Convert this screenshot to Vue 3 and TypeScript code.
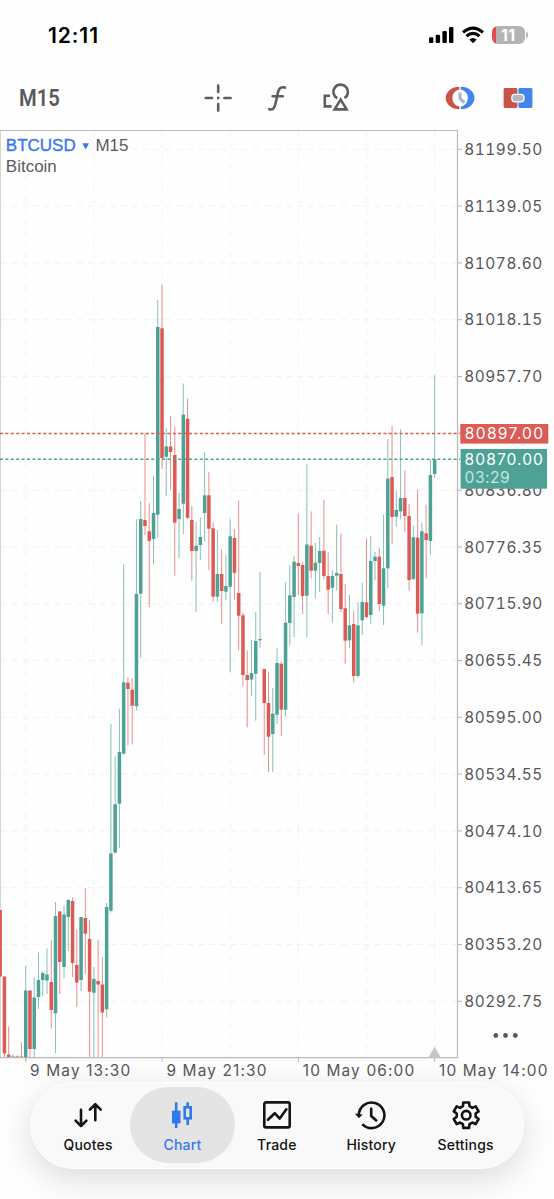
<script setup lang="ts">
type Candle = [high: number, top: number, bottom: number, low: number, up: 0 | 1]

const FIRST_BAR = -6
const BAR_STEP = 4.26
const ORIGIN_X = 25.7

const candles: Candle[] = [
  [910, 910, 976.5, 976.5, 0],
  [976, 976.5, 1053.5, 1057, 0],
  [1026.5, 1054.5, 1057, 1057, 0],
  [1054.5, 1056.5, 1057, 1057, 1],
  [1055.5, 1056.5, 1057, 1057, 0],
  [1042, 1056.5, 1057, 1057, 0],
  [965.5, 990.5, 1057, 1061, 1],
  [990.5, 990.5, 1049, 1057, 0],
  [977.5, 997.5, 1049, 1057, 1],
  [952.5, 980, 997, 1009, 1],
  [971, 973, 980, 996, 1],
  [948.5, 974.5, 980.5, 994, 1],
  [940, 982, 1010, 1028.5, 0],
  [902, 916, 1013.3, 1053, 1],
  [911, 911.5, 962, 994, 0],
  [905.5, 914.5, 967, 978, 1],
  [899, 900, 917, 951, 1],
  [897.5, 901, 963, 977, 0],
  [929.5, 965, 982.5, 1007, 0],
  [917, 917, 980, 991, 1],
  [888, 918, 933.7, 974, 0],
  [920, 939, 991.7, 1057, 0],
  [967, 979, 992.7, 1057, 1],
  [940, 981, 984.5, 1057, 0],
  [957, 984.5, 1012.5, 1057, 0],
  [903, 907, 1009.3, 1017.5, 1],
  [724, 853.5, 910.7, 912.5, 1],
  [756.5, 804.3, 852.7, 852.7, 1],
  [708.7, 752, 803.7, 848, 1],
  [564.3, 682.3, 753.7, 753.7, 1],
  [677.3, 682.7, 689, 745.3, 0],
  [678, 689.7, 705.7, 744.3, 0],
  [519.3, 594, 706.3, 710.5, 1],
  [501, 519, 593.7, 658, 1],
  [433.5, 520, 526, 535.3, 0],
  [503.3, 531.3, 541, 607.3, 0],
  [476, 513, 539, 564.3, 1],
  [300, 327, 514.7, 538, 1],
  [284.7, 328.3, 458, 469, 0],
  [428, 446.3, 456.7, 496, 1],
  [416, 446.5, 452, 490, 0],
  [426.5, 455, 522.7, 575.7, 0],
  [492.7, 509, 519, 558.3, 1],
  [383.5, 414.7, 503.7, 534, 1],
  [398.7, 418.7, 517.7, 519, 0],
  [506, 520, 551, 580.7, 0],
  [522, 545.7, 551, 612, 1],
  [517.5, 537, 545, 560.3, 1],
  [452, 495.3, 513, 541.3, 1],
  [472, 495.3, 528.7, 570, 0],
  [522.7, 528.3, 596.7, 601.7, 0],
  [530, 574, 596.7, 601.7, 1],
  [549.3, 574, 591, 624, 0],
  [554.7, 586, 591.7, 600, 1],
  [519.3, 536.3, 586.7, 672, 1],
  [529, 538, 572.8, 600, 0],
  [500.7, 593, 615.7, 650.3, 0],
  [612.7, 615.3, 675, 686.3, 0],
  [650.7, 675, 680, 727.3, 0],
  [639.7, 673, 679.5, 696, 1],
  [612, 641, 673.7, 720.7, 1],
  [571.7, 639, 640.3, 647.7, 1],
  [669, 669, 703, 755, 0],
  [672, 703, 736.7, 772.3, 0],
  [688.3, 713.7, 734, 772.3, 1],
  [648.3, 663, 714.7, 724, 1],
  [661.7, 663.7, 709.7, 736, 0],
  [582.3, 622.7, 709.7, 716.3, 1],
  [565, 595.3, 623, 645.7, 1],
  [556, 561.7, 597, 637, 1],
  [513.3, 563, 566, 595, 0],
  [562, 565, 596, 614, 0],
  [463.7, 544.5, 595.7, 637.3, 1],
  [511.5, 545.7, 570.7, 578.3, 0],
  [543, 562.7, 570.7, 598.3, 1],
  [537.3, 551, 563, 592, 1],
  [499.7, 550.7, 576, 579.3, 0],
  [552, 576, 589.7, 614.3, 0],
  [570.3, 576, 587.7, 622.7, 1],
  [524.7, 573, 575.7, 590.7, 1],
  [533.7, 574, 609, 612.3, 0],
  [584, 608.3, 640.7, 663.7, 0],
  [595, 625.3, 640.3, 648, 1],
  [610.7, 624, 676, 682.3, 0],
  [602.3, 625.3, 676, 677.7, 1],
  [582.7, 602, 620.3, 635, 1],
  [538.3, 602.3, 617, 618.7, 0],
  [535.7, 561, 615, 624, 1],
  [552, 556.7, 561, 580.3, 1],
  [547.7, 556.7, 604, 611.3, 0],
  [515, 568.3, 605.7, 625, 1],
  [439, 478.7, 568.3, 588.3, 1],
  [425.7, 477, 517, 543.7, 0],
  [490.7, 510, 516.7, 526.7, 1],
  [429.3, 498, 511.3, 519.3, 1],
  [470.7, 498, 516, 531.7, 0],
  [504, 516, 580, 590.7, 0],
  [525.7, 537.3, 579, 580, 1],
  [489.7, 537.7, 613.7, 632.7, 0],
  [522.7, 531.3, 613.3, 645.3, 1],
  [504.7, 533.3, 540, 578.3, 0],
  [459.3, 475, 541, 554.3, 1],
  [375.3, 459, 474, 478, 1],
]

const bars = candles.map(([high, top, bottom, low, up], i) => ({
  x: ORIGIN_X + (i + FIRST_BAR) * BAR_STEP,
  high,
  top,
  low,
  height: bottom - top,
  kind: up ? 'up' : 'down',
}))

// The ask badge fully covers the gridline label that sits on its level.
const ASK_LEVEL = 5

const prices = Array.from({ length: 16 }, (_, i) => ({
  label: (81199.5 - i * 60.45).toFixed(2),
  y: 149.3 + i * 56.8,
  labelled: i !== ASK_LEVEL,
}))

const gridX = Array.from({ length: 7 }, (_, i) => ORIGIN_X + i * BAR_STEP * 16)

const times = ['9 May 13:30', '9 May 21:30', '10 May 06:00', '10 May 14:00'].map((label, i) => ({
  label,
  x: ORIGIN_X + i * BAR_STEP * 32,
}))

const gearPath = (() => {
  const pts: string[] = []
  const shape: [number, number][] = [[-20, 9.6], [-13, 13], [13, 13], [20, 9.6]]
  for (let k = 0; k < 6; k++) {
    for (const [offset, r] of shape) {
      const a = ((k * 60 - 90 + offset) * Math.PI) / 180
      pts.push(`${(16.2 + r * Math.cos(a)).toFixed(2)} ${(16.2 + r * Math.sin(a)).toFixed(2)}`)
    }
  }
  return `M${pts.join('L')}Z`
})()

const tabs = [
  { id: 'quotes', label: 'Quotes' },
  { id: 'chart', label: 'Chart' },
  { id: 'trade', label: 'Trade' },
  { id: 'history', label: 'History' },
  { id: 'settings', label: 'Settings' },
]
const activeTab = 'chart'
</script>

<template>
  <div class="screen">
    <header class="status">
      <span class="clock">12:11</span>
      <div class="indicators">
        <svg class="signal" width="25" height="18" viewBox="0 0 25 18">
          <rect x="0" y="11.2" width="4.4" height="5.8" rx="1.3" />
          <rect x="6.7" y="8.8" width="4.4" height="8.2" rx="1.3" />
          <rect x="13.4" y="5" width="4.4" height="12" rx="1.3" />
          <rect x="20" y="1" width="4.4" height="16" rx="1.3" />
        </svg>
        <svg class="wifi" width="24" height="18" viewBox="0 0 24 18">
          <path d="M2 6.4Q12 -2.2 22 6.4" />
          <path d="M5.5 10.2Q12 4.6 18.5 10.2" />
          <path class="wifi-base" d="M12 17.2L8.3 13.4Q12 10.4 15.7 13.4Z" />
        </svg>
        <div class="battery"><span class="level">11</span></div>
        <i class="nub"></i>
      </div>
    </header>

    <nav class="toolbar">
      <span class="timeframe">M15</span>
      <div class="tools">
        <svg width="32" height="32" viewBox="0 0 32 32">
          <g class="line cross">
            <path d="M3.8 16H10M22.4 16H28.6M16.2 3.6V10M16.2 22V28.6" />
          </g>
          <circle class="fill" cx="16.2" cy="16" r="1.4" />
        </svg>
        <svg width="32" height="32" viewBox="0 0 32 32">
          <path class="line" d="M8.3 27.2C12 28.4 13.6 25.6 14.6 21.2L16.9 10.6C17.8 6.3 20 4.4 24 5.6M11.6 14.3H21.8" />
        </svg>
        <svg width="32" height="32" viewBox="0 0 32 32">
          <path class="line square" d="M10 13.8H4.8V24.4H11.6" />
          <path class="line square" d="M17.2 16.3A7.3 7.3 0 1 1 24.5 16.1" />
          <path class="line square" d="M20.6 17.6L14.6 27.4H26.6Z" />
        </svg>
      </div>
      <div class="trade-tools">
        <svg width="32" height="32" viewBox="0 0 32 32">
          <path class="sell" d="M15.4 4.7A13.7 11.3 0 0 0 15.4 27.3V24.6A8.3 8.7 0 0 1 15.4 7.4Z" />
          <path class="buy" d="M16.8 4.7A13.7 11.3 0 0 1 16.8 27.3V24.6A8.3 8.7 0 0 0 16.8 7.4Z" />
          <path class="hands" d="M16 10.6V16.3L20.2 20.7" />
        </svg>
        <svg width="32" height="32" viewBox="0 0 32 32">
          <rect class="sell" x="1.6" y="6" width="13.8" height="20" rx="1.4" />
          <rect class="buy" x="16.4" y="6" width="14" height="20" rx="1.4" />
          <rect class="knob" x="9.8" y="12.4" width="12.2" height="7.4" rx="3" />
        </svg>
      </div>
    </nav>

    <svg class="chart" width="554" height="952" viewBox="0 130 554 952">
      <g class="grid">
        <path v-for="p in prices" :key="p.label" :d="`M0 ${p.y}H457`" />
        <path v-for="x in gridX" :key="x" :d="`M${x} 131V1057`" />
      </g>

      <path class="frame-left" d="M0.5 131V1057" />
      <path class="frame" d="M0 130.5H457.5V1057.7H0" />
      <path class="marker" d="M434.6 1046.5L440.8 1057.5H428.4Z" />

      <g v-for="b in bars" :key="b.x" :class="b.kind">
        <path class="wick" :d="`M${b.x} ${b.high}V${b.low}`" />
        <rect class="body" :x="b.x - 1.75" :y="b.top" width="3.5" :height="b.height" />
      </g>

      <path class="level-line ask" d="M0 433.5H460" />
      <path class="level-line bid" d="M0 459.2H460" />

      <g class="axis">
        <template v-for="p in prices" :key="p.label">
          <path class="tick" :d="`M458 ${p.y}H462`" />
          <text v-if="p.labelled" class="price" x="464.2" :y="p.y + 5.6">{{ p.label }}</text>
        </template>
        <template v-for="t in times" :key="t.label">
          <path class="tick" :d="`M${t.x} 1058V1062`" />
          <text class="time" :x="t.x + 4.4" y="1075.7">{{ t.label }}</text>
        </template>
      </g>

      <g class="badge">
        <rect class="badge-ask" x="460.3" y="424" width="88" height="19.6" />
        <text class="ask-price" x="464.8" y="439.2">80897.00</text>
        <rect class="badge-bid" x="460.6" y="449" width="86.4" height="39.7" />
        <text x="464.6" y="464.6">80870.00</text>
        <text class="countdown" x="464.6" y="483.2">03:29</text>
      </g>

      <g class="more">
        <circle cx="495.8" cy="1035.5" r="2.4" />
        <circle cx="505.5" cy="1035.5" r="2.4" />
        <circle cx="515.3" cy="1035.5" r="2.4" />
      </g>

      <text class="symbol" x="5.8" y="150.9">BTCUSD</text>
      <path class="caret" d="M82.3 143.2H89L85.7 149.6Z" />
      <text class="desc" x="95.4" y="150.9">M15</text>
      <text class="desc" x="5.8" y="171.6">Bitcoin</text>
    </svg>

    <footer class="tabbar">
      <div v-for="tab in tabs" :key="tab.id" class="tab" :class="{ active: tab.id === activeTab }">
        <svg class="tab-icon" width="32" height="32" viewBox="0 0 32 32">
          <path v-if="tab.id === 'quotes'" class="round" d="M9 10.8V27M3.6 21.6L9 27.1L14.4 21.6M23.3 21.2V5.2M17.9 10.6L23.3 5.1L28.7 10.6" />
          <template v-else-if="tab.id === 'chart'">
            <rect class="solid" x="6" y="11.7" width="8.5" height="12.7" />
            <path d="M10.2 3.3V29M21.7 3.3V8M21.7 20V26" />
            <rect x="18.7" y="8.3" width="6" height="11" />
          </template>
          <template v-else-if="tab.id === 'trade'">
            <rect x="3.3" y="3.4" width="25.4" height="25" rx="1.6" />
            <path class="round" d="M7 20.8L13.7 14.2L18.7 19.6L25.4 10.3" />
          </template>
          <template v-else-if="tab.id === 'history'">
            <path d="M3.8 16.3A12.8 12.8 0 1 1 7.3 25.1" />
            <path class="solid" d="M-0.2 14.6L7.6 15.4L3.9 19.2Z" />
            <path class="round" d="M16.2 9.8V17L21.2 21.4" />
          </template>
          <template v-else>
            <path class="round" :d="gearPath" />
            <circle cx="16.2" cy="16.2" r="4.3" />
          </template>
        </svg>
        <span class="tab-label">{{ tab.label }}</span>
      </div>
    </footer>
  </div>
</template>

<style>
html,
body {
  background: #fff;
}
</style>

<style scoped>
.screen {
  width: 554px;
  height: 1199px;
  overflow: hidden;
  display: flex;
  flex-direction: column;
  background: #fefefe;
  font-family: Inter, 'Noto Sans', sans-serif;
}

.status {
  height: 66px;
  flex: none;
  box-sizing: border-box;
  padding: 4px 26.4px 0 48px;
  display: flex;
  align-items: center;
  justify-content: space-between;
}

.clock {
  font-size: 21px;
  font-weight: 600;
  letter-spacing: 0.9px;
  color: #000;
}

.indicators {
  display: flex;
  align-items: center;
}

.wifi {
  margin: 0 7px 0 7px;
  fill: none;
  stroke: #000;
  stroke-width: 3.1;
}

.wifi-base {
  fill: #000;
  stroke: none;
}

.battery {
  width: 32.4px;
  height: 18px;
  border-radius: 6px;
  background: linear-gradient(90deg, #e5484d 3.8px, #b4b4b4 3.8px);
  display: flex;
  align-items: center;
  justify-content: center;
}

.level {
  color: #fff;
  font-size: 16px;
  font-weight: 700;
  letter-spacing: 0.3px;
  line-height: 18px;
}

.nub {
  width: 1.8px;
  height: 6px;
  margin-left: 1.3px;
  border-radius: 0 2px 2px 0;
  background: #b4b4b4;
}

.toolbar {
  height: 64px;
  flex: none;
  box-sizing: border-box;
  padding: 0 19.6px 0 18.5px;
  display: flex;
  align-items: center;
}

.timeframe {
  width: 183px;
  flex: none;
  margin-top: -2px;
  font-family: Roboto, sans-serif;
  font-size: 24.4px;
  font-weight: 600;
  color: #5a5a5a;
  transform: scaleX(0.83);
  transform-origin: left center;
}

.tools {
  display: flex;
  gap: 27px;
}

.trade-tools {
  margin-left: auto;
  display: flex;
  gap: 26.4px;
}

.line {
  fill: none;
  stroke: #5e5e5e;
  stroke-width: 2.6;
  stroke-linecap: round;
}

.line.square {
  stroke-width: 2.6;
  stroke-linecap: butt;
}

.fill {
  fill: #5e5e5e;
}

.sell {
  fill: #c75448;
}

.buy {
  fill: #4384ec;
}

.hands {
  fill: none;
  stroke: #aab5bd;
  stroke-width: 3;
}

.knob {
  fill: #aebac3;
  stroke: #fff;
  stroke-width: 1.3;
}

.chart {
  flex: none;
  display: block;
}

.grid path {
  stroke: #f2f2f3;
  stroke-width: 1;
  stroke-dasharray: 6 5;
  fill: none;
}

.frame {
  fill: none;
  stroke: #b9b9b9;
  stroke-width: 1.2;
}

.frame-left {
  stroke: #d6d6d6;
}

.marker {
  fill: #c6c6c6;
}

.wick {
  stroke-width: 0.9;
  stroke-opacity: 0.75;
}

.up .wick {
  stroke: #4da195;
}

.up .body {
  fill: #4da195;
}

.down .wick {
  stroke: #db5a54;
}

.down .body {
  fill: #db5a54;
}

.level-line {
  stroke-width: 1.5;
  stroke-dasharray: 3 2.4;
}

.ask {
  stroke: #db5a54;
}

.bid {
  stroke: #4da195;
}

.tick {
  stroke: #b9b9b9;
}

.axis text {
  font-size: 15.4px;
  fill: #57575a;
}

.axis .price {
  letter-spacing: 0.58px;
  font-variant-numeric: tabular-nums;
}

.axis .time {
  letter-spacing: 1.15px;
}

.badge text {
  font-size: 15.6px;
  letter-spacing: 1.05px;
  fill: #fff;
}

.badge .ask-price {
  letter-spacing: 1.3px;
}

.badge .countdown {
  letter-spacing: 0.5px;
  fill: #c5e6e0;
}

.badge-ask {
  fill: #dc5b55;
}

.badge-bid {
  fill: #4da195;
}

.more {
  fill: #58585b;
}

.symbol,
.desc {
  font-family: 'Liberation Sans', Arial, sans-serif;
  font-size: 17px;
  fill: #5b5b5e;
}

.symbol,
.caret {
  fill: #3a78ea;
}

.symbol {
  stroke: #3a78ea;
  stroke-width: 0.35;
}

.tabbar {
  width: 494px;
  height: 87px;
  flex: none;
  box-sizing: border-box;
  margin: 0 0 0 30px;
  padding: 4.4px 0 0 9.9px;
  border-radius: 43.5px;
  border: 1px solid #fff;
  background: #f9f9f9;
  box-shadow: 0 10px 34px rgba(0, 0, 0, 0.14);
  display: flex;
}

.tab {
  flex: 0 0 94.4px;
  height: 76px;
  box-sizing: border-box;
  padding-top: 12px;
  border-radius: 38px;
  display: flex;
  flex-direction: column;
  align-items: center;
  color: #141414;
}

.tab.active {
  flex-basis: 105.2px;
  margin: 0 -5.4px;
  background: #e4e4e4;
  color: #3478ee;
}

.tab-icon {
  overflow: visible;
  fill: none;
  stroke: currentColor;
  stroke-width: 2.6;
}

.round {
  stroke-linecap: round;
  stroke-linejoin: round;
}

.solid {
  fill: currentColor;
  stroke: none;
}

.tab-label {
  margin-top: 4.6px;
  font-size: 14px;
  line-height: 18px;
  font-weight: 550;
  letter-spacing: 0.2px;
}
</style>
